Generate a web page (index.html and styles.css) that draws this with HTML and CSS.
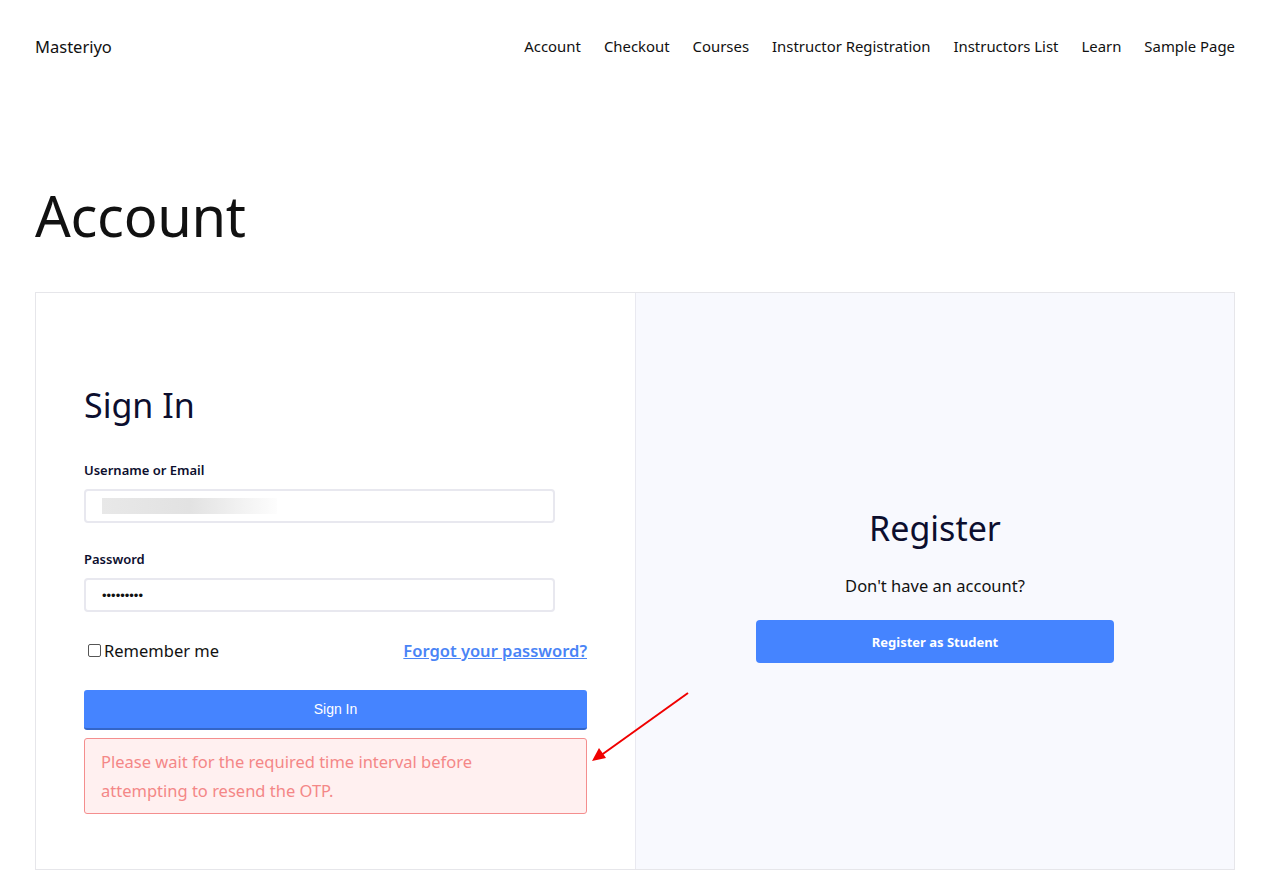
FILE: index.html
```html
<!DOCTYPE html>
<html>
<head>
<meta charset="utf-8">
<link rel="stylesheet" href="styles.css">
</head>
<body>
<header class="site-header">
  <div class="brand">Masteriyo</div>
  <nav class="nav">
    <a>Account</a><a>Checkout</a><a>Courses</a><a>Instructor Registration</a><a>Instructors List</a><a>Learn</a><a>Sample Page</a>
  </nav>
</header>
<main class="main">
  <h1 class="page-title">Account</h1>
  <div class="account-box">
    <section class="signin">
      <h2 class="panel-title">Sign In</h2>
      <label class="field-label">Username or Email</label>
      <div class="input"><span class="blur"></span></div>
      <label class="field-label">Password</label>
      <div class="input"><span class="dots">•••••••••</span></div>
      <div class="row">
        <label class="remember"><span class="checkbox"></span>Remember me</label>
        <a class="forgot">Forgot your password?</a>
      </div>
      <button class="btn-signin">Sign In</button>
      <div class="error">Please wait for the required time interval before attempting to resend the OTP.</div>
    </section>
    <section class="register">
      <h2 class="panel-title">Register</h2>
      <p class="reg-text">Don't have an account?</p>
      <button class="btn-register">Register as Student</button>
    </section>
    <svg class="arrow" width="110" height="80" viewBox="0 0 110 80">
      <line x1="102" y1="5" x2="14" y2="68" stroke="#f00000" stroke-width="2"/>
      <polygon points="6,73 13,60 20,70" fill="#f00000"/>
    </svg>
  </div>
</main>
</body>
</html>
```
FILE: styles.css
```css
* { box-sizing: border-box; }
body {
  margin: 0;
  background: #fff;
  font-family: "Noto Sans", "Open Sans", sans-serif;
  color: #111;
}
.site-header {
  display: flex;
  justify-content: space-between;
  align-items: center;
  padding: 0 49px 0 35px;
  height: 92px;
}
.brand { font-size: 16.5px; color: #111; }
.nav { display: flex; gap: 23px; }
.nav a { font-size: 14.9px; color: #111; }
.main { padding: 88px 49px 0 35px; }
.page-title {
  margin: 0 0 42px;
  font-size: 56px;
  font-weight: 400;
  line-height: 70px;
  color: #111;
  letter-spacing: -0.3px;
}
.account-box {
  position: relative;
  display: flex;
  border: 1px solid #e6e6ea;
  height: 578px;
}
.signin {
  width: 600px;
  padding: 87px 48px 0 48px;
  background: #fff;
  border-right: 1px solid #e9e9f0;
}
.panel-title {
  margin: 0;
  font-size: 34px;
  font-weight: 400;
  color: #0c0e2e;
  line-height: 50px;
}
.signin .panel-title { margin-bottom: 31px; }
.field-label {
  display: block;
  font-size: 13px;
  font-weight: 600;
  color: #0c0e2e;
  margin-bottom: 10px;
}
.input {
  width: 471px;
  height: 34px;
  border: 2px solid #e8e8ef;
  border-radius: 4px;
  margin-bottom: 27px;
  display: flex;
  align-items: center;
  padding-left: 16px;
}
.blur {
  display: block;
  width: 175px;
  height: 16px;
  background: linear-gradient(90deg, #e8e8e8 0%, #e2e2e2 50%, #fdfdfd 100%);
}
.dots { font-size: 13px; letter-spacing: 0; color: #111; font-family: "Liberation Sans", sans-serif; }
.row {
  display: flex;
  justify-content: space-between;
  align-items: center;
  margin-top: 11px;
  margin-bottom: 28px;
}
.remember {
  display: flex;
  align-items: center;
  font-size: 16.5px;
  color: #111;
  padding-left: 4px;
}
.checkbox {
  width: 13px;
  height: 13px;
  border: 1px solid #555;
  border-radius: 2px;
  margin-right: 3px;
}
.forgot {
  font-size: 16.5px;
  font-weight: 600;
  color: #4a84f6;
  text-decoration: underline;
}
.btn-signin {
  display: block;
  width: 503px;
  height: 40px;
  border: none;
  border-bottom: 2px solid #3466c8;
  border-radius: 3px;
  background: #4584ff;
  color: #fff;
  font-family: "Liberation Sans", Arial, sans-serif;
  font-size: 14px;
}
.error {
  margin-top: 8px;
  width: 503px;
  padding: 8px 90px 8px 16px;
  background: #fff0f0;
  border: 1px solid #f48e8e;
  border-radius: 3px;
  color: #f48787;
  font-size: 16.5px;
  line-height: 29px;
}
.register {
  flex: 1;
  background: #f8f9fe;
  display: flex;
  flex-direction: column;
  align-items: center;
  justify-content: center;
  padding-top: 4px;
}
.reg-text {
  margin: 21px 0 23px;
  font-size: 16.5px;
  color: #111;
}
.btn-register {
  width: 358px;
  height: 43px;
  border: none;
  border-radius: 4px;
  background: #4584ff;
  color: #fff;
  font-family: "Noto Sans", sans-serif;
  font-size: 13px;
  font-weight: 700;
}
.arrow {
  position: absolute;
  left: 550px;
  top: 395px;
}
```
